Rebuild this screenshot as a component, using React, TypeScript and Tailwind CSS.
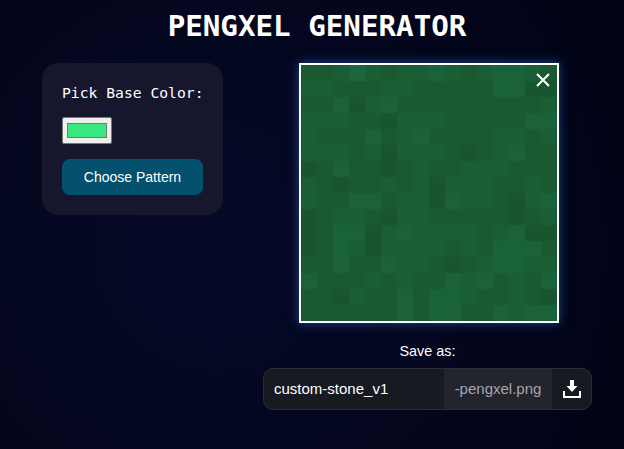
import React from 'react';

// tile shades for the 16x16 preview, 0 = darkest
const tiles = [
  [1, 1, 2, 4, 2, 1, 2, 2, 3, 2, 1, 2, 3, 3, 2, 1],
  [2, 2, 1, 1, 1, 2, 2, 1, 1, 1, 1, 1, 3, 3, 0, 0],
  [1, 1, 3, 0, 2, 3, 1, 1, 1, 1, 1, 1, 1, 1, 1, 2],
  [2, 2, 2, 1, 1, 0, 2, 2, 2, 1, 1, 1, 1, 1, 3, 3],
  [2, 1, 1, 1, 3, 1, 2, 3, 1, 1, 1, 1, 2, 2, 1, 2],
  [2, 2, 2, 1, 2, 0, 2, 2, 2, 1, 0, 1, 2, 3, 1, 1],
  [0, 1, 3, 1, 1, 0, 1, 2, 1, 1, 2, 2, 2, 1, 1, 1],
  [2, 1, 0, 1, 1, 2, 1, 2, 0, 2, 2, 2, 1, 1, 2, 1],
  [2, 1, 1, 3, 3, 1, 2, 2, 0, 3, 2, 2, 1, 0, 2, 3],
  [0, 1, 2, 2, 1, 0, 2, 2, 1, 1, 1, 1, 1, 0, 1, 2],
  [0, 1, 3, 3, 0, 2, 3, 2, 2, 2, 2, 1, 2, 3, 0, 0],
  [0, 1, 3, 2, 0, 2, 2, 2, 2, 1, 2, 1, 3, 3, 3, 1],
  [1, 1, 3, 1, 1, 3, 2, 2, 1, 0, 1, 2, 3, 3, 2, 2],
  [3, 1, 1, 1, 2, 1, 2, 1, 1, 3, 2, 3, 1, 2, 1, 3],
  [1, 1, 0, 2, 1, 1, 3, 1, 3, 3, 2, 1, 1, 2, 1, 0],
  [1, 1, 1, 1, 1, 1, 3, 1, 3, 3, 1, 1, 3, 2, 3, 3],
];

const shades = ['#195630', '#1a5a33', '#1a5e36', '#1a6239', '#1b663c'];

const PixelPreview: React.FC = () => (
  <svg width="256" height="256" viewBox="0 0 16 16" shapeRendering="crispEdges" className="block">
    {tiles.map((row, y) =>
      row.map((shade, x) => <rect key={`${x}-${y}`} x={x} y={y} width="1" height="1" fill={shades[shade]} />)
    )}
  </svg>
);

const App: React.FC = () => {
  return (
    <div className="h-[449px] w-[624px] overflow-hidden bg-[radial-gradient(circle_at_35%_55%,#060a28_0%,#03061d_55%,#010415_100%)] font-['Liberation_Sans',sans-serif] text-white">
      <h1 className="pt-[8px] pl-[10px] text-center font-['DejaVu_Sans_Mono',monospace] text-[29.2px] leading-[36px] font-bold">
        PENGXEL GENERATOR
      </h1>

      <div className="mt-[19px] flex items-start gap-[40px] pl-[42px]">
        <div className="flex w-[181px] flex-col items-start rounded-[16px] bg-[#16172c] p-[20px]">
          <label className="pt-[1px] font-['DejaVu_Sans_Mono',monospace] text-[14.7px] leading-[18px] whitespace-nowrap">
            Pick Base Color:
          </label>
          <input
            type="color"
            defaultValue="#3ae882"
            className="mt-[15px] h-[27px] w-[50px] rounded-[2px] border border-[#767676] bg-[#efefef] px-[2px] py-[1px]"
          />
          <button className="mt-[15px] h-[36px] w-full rounded-[8px] bg-[#04506f] text-[14px] text-white">
            Choose Pattern
          </button>
        </div>

        <div className="flex w-[329px] flex-col items-center">
          <div className="relative ml-[2px] border-2 border-white shadow-[0_0_10px_#3b82f680]">
            <PixelPreview />
            <button className="absolute top-[7px] right-[6px] text-white">
              <svg width="16" height="16" viewBox="0 0 16 16" className="block">
                <path d="M2 2 14 14M14 2 2 14" stroke="currentColor" strokeWidth="2" fill="none" />
              </svg>
            </button>
          </div>

          <p className="mt-[19px] text-[14.4px] leading-[18px]">Save as:</p>

          <div className="mt-[8px] flex h-[42px] w-full items-stretch overflow-hidden rounded-[10px] border border-[#2c2e35] bg-[#181a21]">
            <input
              defaultValue="custom-stone_v1"
              className="w-[180px] bg-transparent pl-[10px] text-[15px] text-white outline-none"
            />
            <span className="flex w-[108px] items-center justify-center bg-[#22242e] text-[15px] text-[#a5a6ab]">
              -pengxel.png
            </span>
            <button className="flex flex-1 items-center justify-center">
              <svg width="18" height="18" viewBox="0 0 18 18" className="block" fill="currentColor">
                <path d="M7 0h4v6h3.5L9 12 3.5 6H7z" />
                <path d="M0 11h2v5h14v-5h2v7H0z" />
              </svg>
            </button>
          </div>
        </div>
      </div>
    </div>
  );
};

export default App;
